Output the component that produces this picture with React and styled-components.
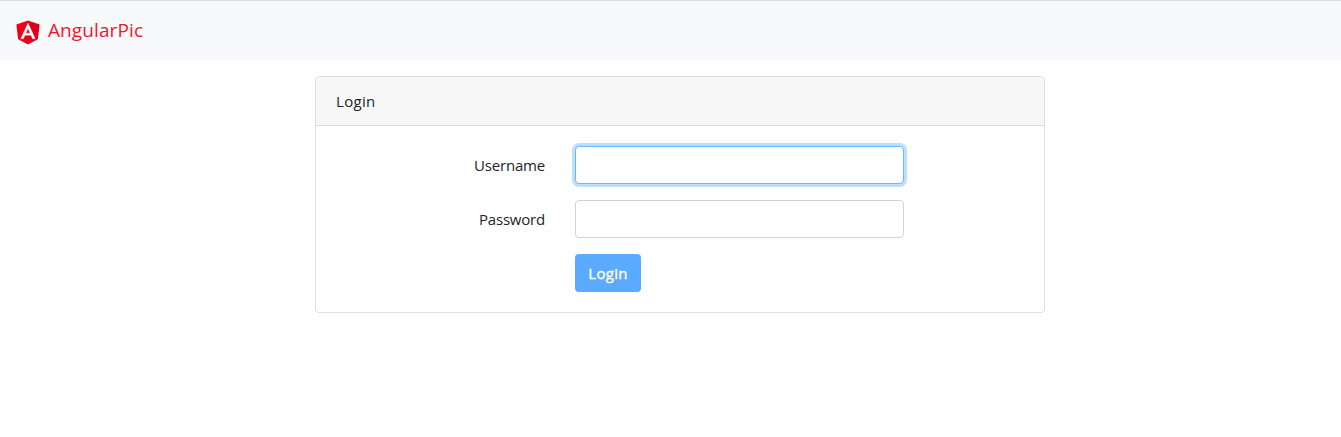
import React from "react";
import styled, { createGlobalStyle } from "styled-components";

const GlobalStyle = createGlobalStyle`
  *, *::before, *::after { box-sizing: border-box; }
  body {
    margin: 0;
    background: #fff;
    color: #212529;
    font-family: "Segoe UI", "Open Sans", "Noto Sans", sans-serif;
    font-size: 15px;
    line-height: 24px;
  }
`;

const Navbar = styled.nav`
  display: flex;
  align-items: center;
  height: 60px;
  padding: 1px 16px 0;
  border-top: 1px solid #dadce0;
  background: #f8f9fb;
`;

const Brand = styled.a`
  display: flex;
  align-items: center;
  gap: 8px;
  color: #f5142d;
  text-decoration: none;
`;

const Logo = styled.svg`
  width: 24px;
  height: 25px;
  margin-top: 3px;
`;

const BrandName = styled.span`
  font-size: 19px;
  letter-spacing: 0.1px;
  line-height: 30px;
  margin-top: -3px;
`;

const Card = styled.main`
  width: 730px;
  height: 237px;
  margin: 16px 0 0 315px;
  border: 1px solid #dfdfdf;
  border-radius: 4px;
  overflow: hidden;
`;

const CardHeader = styled.header`
  height: 49px;
  padding: 12px 20px;
  border-bottom: 1px solid #d9d9d9;
  background: #f7f7f7;
  letter-spacing: 0.3px;
`;

const Form = styled.form`
  display: flex;
  flex-direction: column;
  gap: 16px;
  padding: 20px;
`;

const Row = styled.div`
  display: grid;
  grid-template-columns: 209px 329px;
  column-gap: 30px;
  height: 38px;
`;

const Label = styled.label`
  padding-top: 7px;
  text-align: right;
  letter-spacing: -0.2px;
`;

const Input = styled.input`
  width: 100%;
  height: 38px;
  padding: 6px 12px;
  border: 1px solid ${(p) => (p.$focused ? "#66bbff" : "#ced4da")};
  border-radius: 4px;
  outline: 0;
  font: inherit;
  background: #fff;
  box-shadow: ${(p) => (p.$focused ? "0 0 0 3px #bfdeff" : "none")};
`;

const Button = styled.button`
  grid-column: 2;
  justify-self: start;
  width: 66px;
  height: 38px;
  padding: 0 0 1px;
  border: 0;
  border-radius: 4px;
  background: #5aaaff;
  color: #fff;
  font: inherit;
  letter-spacing: 0.3px;
  -webkit-text-stroke: 0.35px #fff;
`;

export default function App() {
  return (
    <>
      <GlobalStyle />
      <Navbar>
        <Brand>
          <Logo viewBox="29 26 192 208" preserveAspectRatio="none" aria-hidden="true">
            <path fill="#f00018" d="M125 30 31.9 63.2l14.2 123.1L125 230z" />
            <path fill="#dc001c" d="M124.5 30v200l79.4-43.7 14.2-123.1z" />
            <path
              fill="#fff"
              stroke="#fff"
              strokeWidth="3"
              d="M125 52.1 66.8 182.6h21.7l11.7-29.2h49.4l11.7 29.2H183zm17 83.3h-34l17-40.9z"
            />
          </Logo>
          <BrandName>AngularPic</BrandName>
        </Brand>
      </Navbar>
      <Card>
        <CardHeader>Login</CardHeader>
        <Form>
          <Row>
            <Label htmlFor="username">Username</Label>
            <Input id="username" $focused />
          </Row>
          <Row>
            <Label htmlFor="password">Password</Label>
            <Input id="password" type="password" />
          </Row>
          <Row>
            <Button type="button">Login</Button>
          </Row>
        </Form>
      </Card>
    </>
  );
}
